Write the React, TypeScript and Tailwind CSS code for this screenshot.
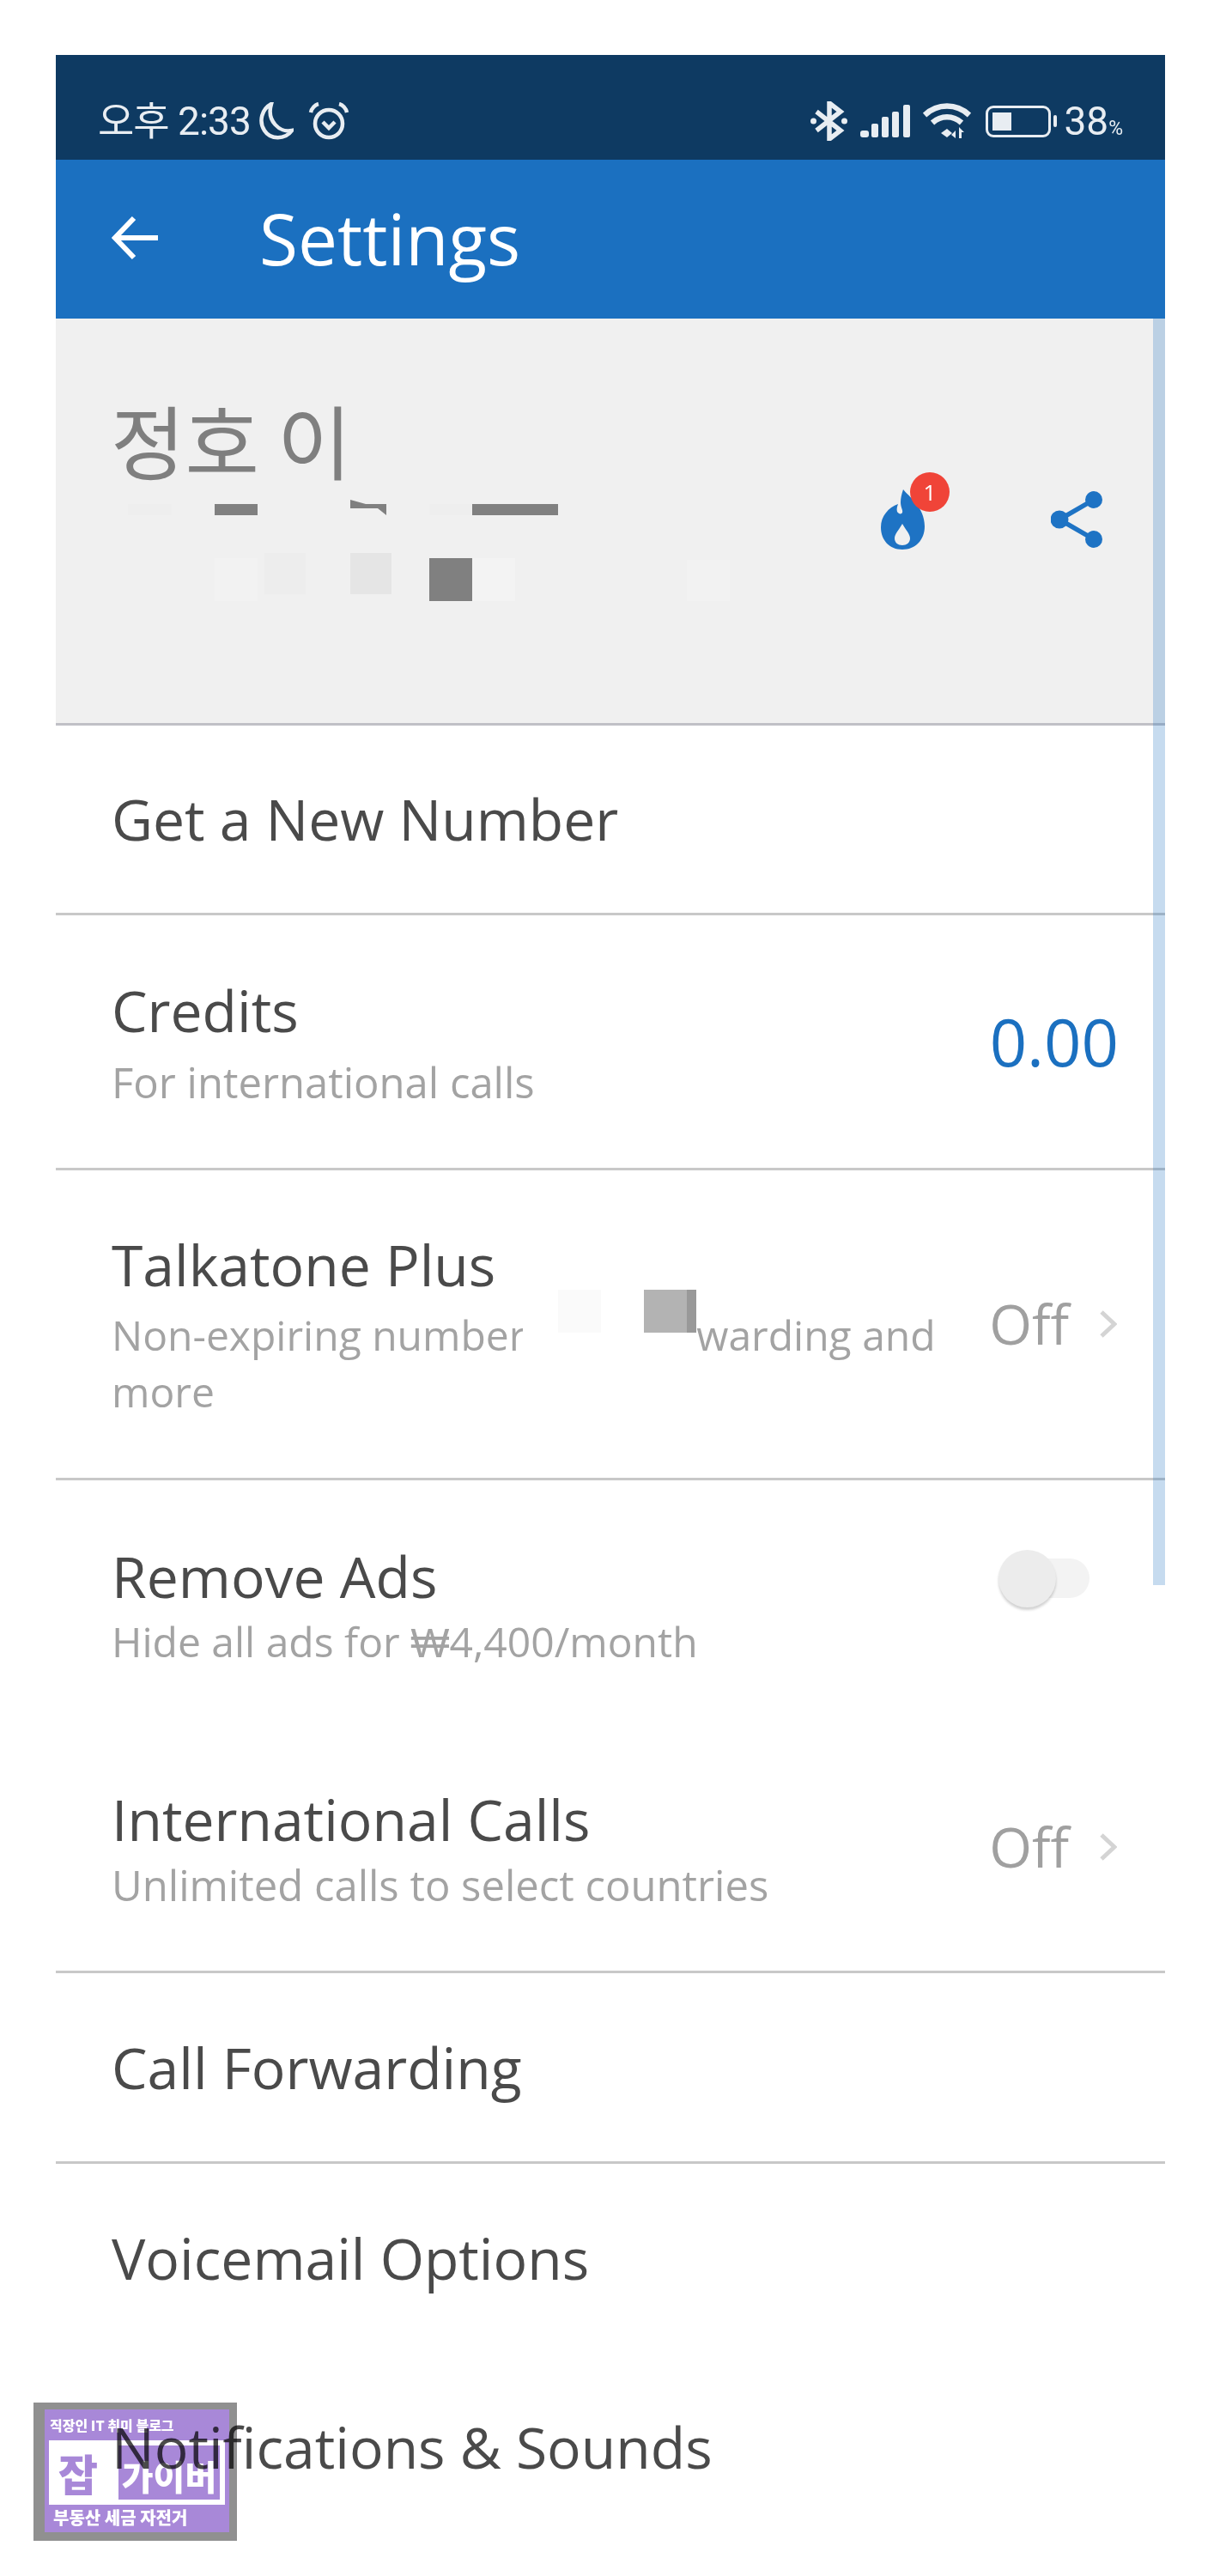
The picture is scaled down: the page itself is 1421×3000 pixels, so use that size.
import { ReactNode } from 'react'

const openSans = "font-['Open_Sans',sans-serif]"

function Title({ children }: { children: ReactNode }) {
  return <div className="text-[66px] leading-[76px] text-[#4a4a4a] whitespace-nowrap">{children}</div>
}

function Sub({ children, className = '' }: { children: ReactNode; className?: string }) {
  return <div className={`leading-[66px] text-[#a3a3a3] ${className}`}>{children}</div>
}

function OffValue() {
  return (
    <div className="self-center flex items-center pr-[56px]">
      <span className="text-[64px] leading-[76px] text-[#a0a0a0]">Off</span>
      <svg className="ml-[36px]" width="20" height="34" viewBox="0 0 20 34" fill="none" stroke="#d4d4d4" strokeWidth="5">
        <path d="M2 3l15 14L2 31" />
      </svg>
    </div>
  )
}

function SingleRow({ label, className }: { label: string; className: string }) {
  return (
    <div className={`flex items-center pl-[65px] ${className}`}>
      <Title>{label}</Title>
    </div>
  )
}

function StatusIcons() {
  return (
    <div className="flex items-center">
      <svg width="43" height="46" viewBox="0 0 43 46" fill="none" stroke="#e8edf2" strokeWidth="5.5">
        <path d="M7 12l28 22-13 10V2l13 10L7 34" />
        <circle cx="3.5" cy="23" r="3.5" fill="#e8edf2" stroke="none" />
        <circle cx="39.5" cy="23" r="3.5" fill="#e8edf2" stroke="none" />
      </svg>
      <svg className="ml-[15px]" width="58" height="38" viewBox="0 0 58 38" fill="#e8edf2">
        <rect x="0" y="30" width="10" height="8" rx="3" />
        <rect x="13" y="22" width="8" height="16" rx="2" />
        <rect x="25" y="14" width="8" height="24" rx="2" />
        <rect x="37" y="8" width="8" height="30" rx="2" />
        <rect x="50" y="0" width="8" height="38" rx="2" />
      </svg>
      <svg className="ml-[15px]" width="56" height="42" viewBox="0 0 56 42" fill="none" stroke="#e8edf2" strokeWidth="6.5">
        <path d="M2 14c15-14 37-14 52 0" />
        <path d="M11 23c10-9 24-9 34 0" />
        <path d="M21 35l7-5 6 5-6 5z" fill="#e8edf2" stroke="none" />
        <path d="M38 32l-5 5 5 4zM42 28l6 6h-3v7h-3z" fill="#e8edf2" stroke="none" />
      </svg>
      <div className="ml-[17px] w-[76px] h-[37px] rounded-[9px] border-[3px] border-[#e8edf2] p-[5px]">
        <div className="w-[22px] h-full bg-[#e8edf2]" />
      </div>
      <div className="ml-[3px] w-[4px] h-[14px] rounded-full bg-[#e8edf2]" />
      <div className="ml-[8px] flex items-baseline font-['Roboto',sans-serif] text-[#e8edf2]">
        <span className="text-[46px] leading-[48px]">38</span>
        <span className="text-[23px] leading-[24px]">%</span>
      </div>
    </div>
  )
}

function StatusBar() {
  return (
    <div className="h-[122px] bg-[#0e3a62] flex items-center justify-between pl-[49px] pr-[49px] pt-[32px]">
      <div className="flex items-center text-[#e8edf2]">
        <span className="font-['Roboto','Noto_Sans_CJK_KR',sans-serif] text-[46px] leading-[48px] tracking-[-1px]">오후 2:33</span>
        <svg className="ml-[8px]" width="42" height="44" viewBox="0 0 42 44" fill="none" stroke="#e8edf2" strokeWidth="4.5">
          <path d="M16 2C5 8 1 22 8 33s24 11 32 0C26 36 10 22 16 2z" />
        </svg>
        <svg className="ml-[17px]" width="48" height="44" viewBox="0 0 48 44" fill="none" stroke="#e8edf2" strokeWidth="4.5">
          <circle cx="24" cy="25" r="16" />
          <path d="M17 23l7 7 7-7" />
          <path d="M3 12c1-5 5-9 9-10M45 12c-1-5-5-9-9-10" />
        </svg>
      </div>
      <StatusIcons />
    </div>
  )
}

function AppBar() {
  return (
    <div className="h-[185px] bg-[#1b70c0] flex items-center pb-[4px]">
      <svg className="ml-[65px]" width="54" height="52" viewBox="0 0 54 52" fill="none" stroke="#ffffff" strokeWidth="6">
        <path d="M54 26H4M26 3L4 26l22 23" />
      </svg>
      <span className="ml-[118px] text-[82px] leading-[100px] text-white">Settings</span>
    </div>
  )
}

function Flame() {
  return (
    <div className="relative w-[51px] h-[70px]">
      <svg width="51" height="70" viewBox="0 0 51 70" fill="#1e73c4">
        <path
          fillRule="evenodd"
          d="M26 0c6 8 25 20 25 43 0 16-11 27-26 27S0 59 0 44c0-13 9-23 20-27-1 3-2 6-1 9 2 3 5 3 6 1 1-3-2-6-2-12 0-5 1-9 3-15zM25 40c-4 7-9 12-9 17 0 5 4 8 9 8s9-3 9-8c0-5-5-10-9-17z"
        />
      </svg>
      <div className="absolute left-[34px] top-[-20px] w-[46px] h-[46px] rounded-full bg-[#f04438] flex items-center justify-center text-white text-[26px] leading-none">
        1
      </div>
    </div>
  )
}

function ShareIcon() {
  return (
    <svg width="60" height="66" viewBox="0 0 60 66" fill="none" stroke="#1e73c4" strokeWidth="5.5">
      <path d="M50 10L10 33l40 23" />
      <circle cx="50" cy="10" r="10" fill="#1e73c4" stroke="none" />
      <circle cx="10" cy="33" r="10.5" fill="#1e73c4" stroke="none" />
      <circle cx="50" cy="56" r="10" fill="#1e73c4" stroke="none" />
    </svg>
  )
}

function ProfileHeader() {
  return (
    <div className="relative h-[474px] bg-[#f0f0f0] border-b-[3px] border-[#c0c0c6] flex justify-between pl-[64px] pr-[73px]">
      <div className="pt-[90px] font-['Noto_Sans_CJK_KR',sans-serif] text-[94px] leading-[100px] text-[#7f7f7f]">정호 이</div>
      <div className="flex items-start pt-[199px] gap-[147px]">
        <Flame />
        <div className="mt-[2px]">
          <ShareIcon />
        </div>
      </div>

      {/* mosaic over the phone number */}
      <div className="absolute left-[84px] top-[216px] w-[51px] h-[13px] bg-[#eeeeee]" />
      <div className="absolute left-[185px] top-[216px] w-[50px] h-[13px] bg-[#808080]" />
      <svg className="absolute left-[343px] top-[211px]" width="42" height="18" viewBox="0 0 42 18" fill="#808080">
        <path d="M0 0l18 5h24v13l-10-8H0z" />
      </svg>
      <div className="absolute left-[435px] top-[216px] w-[50px] h-[13px] bg-[#eeeeee]" />
      <div className="absolute left-[485px] top-[216px] w-[100px] h-[13px] bg-[#808080]" />
      <div className="absolute left-[185px] top-[279px] w-[50px] h-[50px] bg-[#f2f2f2]" />
      <div className="absolute left-[243px] top-[273px] w-[48px] h-[48px] bg-[#ededed]" />
      <div className="absolute left-[343px] top-[273px] w-[48px] h-[48px] bg-[#e5e5e5]" />
      <div className="absolute left-[435px] top-[279px] w-[50px] h-[50px] bg-[#808080]" />
      <div className="absolute left-[485px] top-[279px] w-[50px] h-[50px] bg-[#f3f3f3]" />
      <div className="absolute left-[735px] top-[281px] w-[50px] h-[48px] bg-[#f2f2f2]" />
    </div>
  )
}

function Watermark() {
  return (
    <div className="absolute left-[39px] top-[2798px] w-[237px] h-[161px] bg-[#909090] pl-[13px] pr-[9px] pt-[8px] pb-[10px] mix-blend-multiply font-['Noto_Sans_CJK_KR',sans-serif] font-black">
      <div className="h-full bg-[#a888d8] flex flex-col items-stretch px-[5px] text-white">
        <div className="h-[36px] pl-[1px] text-[16px] leading-[36px] whitespace-nowrap">직장인 IT 취미 블로그</div>
        <div className="h-[75px] bg-white flex pl-[11px] pr-[6px] py-[6px]">
          <div className="w-[58px] text-[#a888d8] text-[50px] leading-[62px]">잡</div>
          <div className="flex-1 ml-[12px] bg-[#a888d8] text-white text-[40px] leading-[70px] text-center">가이버</div>
        </div>
        <div className="flex-1 pl-[5px] text-[20px] leading-[30px] whitespace-nowrap">부동산 세금 자전거</div>
      </div>
    </div>
  )
}

export default function App() {
  return (
    <div className={`relative h-[3000px] overflow-hidden bg-white pt-[64px] pl-[65px] ${openSans}`}>
      <div className="relative w-[1292px]">
        <StatusBar />
        <AppBar />
        <ProfileHeader />

        <SingleRow label="Get a New Number" className="h-[221px] pb-[2px] border-b-[3px] border-[#c8c8c8]" />

        <div className="h-[297px] border-b-[3px] border-[#c8c8c8] flex justify-between pl-[65px]">
          <div className="pt-[72px]">
            <Title>Credits</Title>
            <Sub className="mt-[13px] text-[49px]">For international calls</Sub>
          </div>
          <div className="self-center pr-[54px] text-[76px] leading-[90px] text-[#1b70c0]">0.00</div>
        </div>

        <div className="relative h-[361px] border-b-[3px] border-[#c8c8c8] flex justify-between pl-[65px]">
          <div className="pt-[71px] w-[980px]">
            <Title>Talkatone Plus</Title>
            <Sub className="mt-[12px] text-[48px]">Non-expiring numbers, call forwarding and more</Sub>
          </div>
          <OffValue />
          {/* censored part of the sentence */}
          <div className="absolute left-[544px] top-[139px] w-[202px] h-[90px] bg-white" />
          <div className="absolute left-[585px] top-[139px] w-[50px] h-[50px] bg-[#fafafa]" />
          <div className="absolute left-[685px] top-[139px] w-[50px] h-[50px] bg-[#b3b3b3]" />
          <div className="absolute left-[735px] top-[139px] w-[11px] h-[50px] bg-[#999999]" />
        </div>

        <div className="h-[283px] flex justify-between pl-[65px]">
          <div className="pt-[73px]">
            <Title>Remove Ads</Title>
            <Sub className="mt-[6px] text-[48px]">Hide all ads for ₩4,400/month</Sub>
          </div>
          <div className="relative mt-[81px] mr-[88px] w-[106px] h-[67px]">
            <div className="absolute right-0 top-[10px] w-[79px] h-[46px] rounded-full bg-[#f3f3f3]" />
            <div className="absolute left-0 top-0 w-[67px] h-[67px] rounded-full bg-[#ececec] shadow-[0_3px_3px_rgba(0,0,0,0.18)]" />
          </div>
        </div>

        <div className="h-[291px] border-b-[3px] border-[#c8c8c8] flex justify-between pl-[65px]">
          <div className="pt-[73px]">
            <Title>International Calls</Title>
            <Sub className="mt-[6px] text-[49px]">Unlimited calls to select countries</Sub>
          </div>
          <OffValue />
        </div>

        <SingleRow label="Call Forwarding" className="h-[222px] pb-[2px] border-b-[3px] border-[#c8c8c8]" />
        <SingleRow label="Voicemail Options" className="h-[222px] pb-[4px]" />
        <SingleRow label="Notifications & Sounds" className="h-[220px] pb-[6px]" />

        {/* scrollbar thumb */}
        <div className="absolute right-0 top-[307px] w-[14px] h-[1475px] bg-[#1b70c0]/25" />
      </div>
      <Watermark />
    </div>
  )
}
